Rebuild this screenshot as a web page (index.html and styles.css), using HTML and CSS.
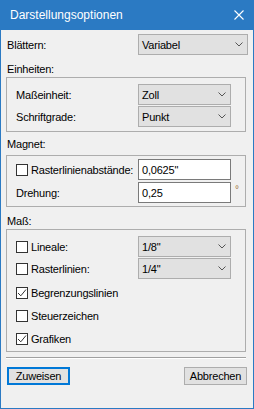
FILE: index.html
```html
<!DOCTYPE html>
<html lang="de">
<head>
  <meta charset="UTF-8">
  <title>Darstellungsoptionen</title>
  <link rel="stylesheet" href="styles.css">
</head>
<body>
  <div class="dialog">
    <div class="titlebar">
      <span class="title">Darstellungsoptionen</span>
      <svg class="close" width="10" height="10" viewBox="0 0 10 10"><path d="M0.5 0.5 L9.5 9.5 M9.5 0.5 L0.5 9.5" stroke="#fff" stroke-width="1.1" fill="none"/></svg>
    </div>

    <div class="content">
      <div class="top-row">
        <span>Blättern:</span>
        <div class="select wide"><span>Variabel</span><svg class="chev" width="8" height="5" viewBox="0 0 8 5"><path d="M0.5 0.5 L4 4 L7.5 0.5" stroke="#555" fill="none"/></svg></div>
      </div>

      <div class="section-label">Einheiten:</div>
      <div class="group units">
        <div class="field">
          <span>Maßeinheit:</span>
          <div class="select"><span>Zoll</span><svg class="chev" width="8" height="5" viewBox="0 0 8 5"><path d="M0.5 0.5 L4 4 L7.5 0.5" stroke="#555" fill="none"/></svg></div>
        </div>
        <div class="field">
          <span>Schriftgrade:</span>
          <div class="select"><span>Punkt</span><svg class="chev" width="8" height="5" viewBox="0 0 8 5"><path d="M0.5 0.5 L4 4 L7.5 0.5" stroke="#555" fill="none"/></svg></div>
        </div>
      </div>

      <div class="section-label magnet-label">Magnet:</div>
      <div class="group magnet">
        <div class="field">
          <span class="check"><span class="box"></span>Rasterlinienabstände:</span>
          <div class="textbox">0,0625"</div>
        </div>
        <div class="field">
          <span>Drehung:</span>
          <div class="textbox">0,25</div>
          <span class="unit">°</span>
        </div>
      </div>

      <div class="section-label mass-label">Maß:</div>
      <div class="group mass">
        <div class="field">
          <span class="check"><span class="box"></span>Lineale:</span>
          <div class="select"><span>1/8"</span><svg class="chev" width="8" height="5" viewBox="0 0 8 5"><path d="M0.5 0.5 L4 4 L7.5 0.5" stroke="#555" fill="none"/></svg></div>
        </div>
        <div class="field">
          <span class="check"><span class="box"></span>Rasterlinien:</span>
          <div class="select"><span>1/4"</span><svg class="chev" width="8" height="5" viewBox="0 0 8 5"><path d="M0.5 0.5 L4 4 L7.5 0.5" stroke="#555" fill="none"/></svg></div>
        </div>
        <div class="check-row first">
          <span class="check"><span class="box"><svg width="10" height="10" viewBox="0 0 10 10"><path d="M1 5 L3.8 7.8 L9 1.5" stroke="#333" fill="none"/></svg></span>Begrenzungslinien</span>
        </div>
        <div class="check-row">
          <span class="check"><span class="box"></span>Steuerzeichen</span>
        </div>
        <div class="check-row">
          <span class="check"><span class="box"><svg width="10" height="10" viewBox="0 0 10 10"><path d="M1 5 L3.8 7.8 L9 1.5" stroke="#333" fill="none"/></svg></span>Grafiken</span>
        </div>
      </div>

      <div class="separator"></div>

      <div class="buttons">
        <button class="btn default">Zuweisen</button>
        <button class="btn">Abbrechen</button>
      </div>
    </div>
  </div>
</body>
</html>
```

FILE: styles.css
```css
body {
  margin: 0;
  background: #f0f0f0;
  font-family: "Liberation Sans", Arial, sans-serif;
  font-size: 11px;
  letter-spacing: -0.2px;
  color: #000;
}

.dialog {
  width: 254px;
  height: 409px;
  box-sizing: border-box;
  border: 1px solid #2b7ac3;
  border-top: none;
  background: #f0f0f0;
}

.titlebar {
  height: 30px;
  background: #2b7ac3;
  display: flex;
  align-items: center;
  justify-content: space-between;
  padding: 0 10px 0 9px;
  margin: 0 -1px;
}

.title {
  color: #fff;
  font-size: 12px;
  letter-spacing: 0;
  padding-left: 1px;
}

.close {
  display: block;
}

.content {
  padding: 4px 5px 0 5px;
}

.top-row {
  display: flex;
  align-items: center;
  justify-content: space-between;
  height: 21px;
  padding-left: 1px;
}

.select {
  height: 21px;
  box-sizing: border-box;
  border: 1px solid #adadad;
  background: #e1e1e1;
  display: flex;
  align-items: center;
  justify-content: space-between;
  padding: 0 4px 0 3px;
}

.select.wide {
  width: 110px;
}

.chev {
  display: block;
}

.section-label {
  line-height: 13px;
  margin: 8px 0 1px 1px;
}

.magnet-label {
  margin-top: 6px;
  margin-bottom: 4px;
}

.mass-label {
  margin-top: 8px;
  margin-bottom: 1px;
}

.group {
  width: 240px;
  box-sizing: border-box;
  border: 1px solid #adadad;
  padding: 6px 0 4px 9px;
}

.units .field + .field {
  margin-top: 1px;
}

.magnet {
  padding-top: 3px;
  padding-bottom: 3px;
}

.magnet .field + .field {
  margin-top: 2px;
}

.mass {
  padding-bottom: 1px;
}

.mass .field + .field {
  margin-top: 1px;
}

.field {
  display: grid;
  grid-template-columns: 122px 93px auto;
  align-items: center;
  height: 21px;
}

.field .select {
  width: 93px;
}

.textbox {
  width: 93px;
  height: 21px;
  box-sizing: border-box;
  border: 1px solid #7a7a7a;
  background: #fff;
  display: flex;
  align-items: center;
  padding-left: 3px;
}

.unit {
  color: #a0703c;
  font-size: 10px;
  padding-left: 4px;
  align-self: start;
  margin-top: 2px;
}

.check {
  display: flex;
  align-items: center;
}

.box {
  width: 12px;
  height: 12px;
  box-sizing: border-box;
  border: 1px solid #333;
  background: #fff;
  margin-right: 3px;
  display: flex;
  align-items: center;
  justify-content: center;
}

.box svg {
  display: block;
}

.check-row {
  height: 23px;
  display: flex;
  align-items: center;
}

.check-row.first {
  margin-top: 2px;
}

.separator {
  width: 240px;
  margin-top: 5px;
  border-top: 1px solid #a0a0a0;
  border-bottom: 1px solid #fff;
}

.buttons {
  display: flex;
  justify-content: space-between;
  margin-top: 8px;
  padding: 0 1px;
}

.btn {
  width: 63px;
  height: 18px;
  box-sizing: border-box;
  border: 1px solid #adadad;
  background: #e1e1e1;
  font-family: inherit;
  font-size: 11px;
  letter-spacing: -0.2px;
  color: #000;
  padding: 0;
}

.btn.default {
  border: 2px solid #0078d7;
}
```
